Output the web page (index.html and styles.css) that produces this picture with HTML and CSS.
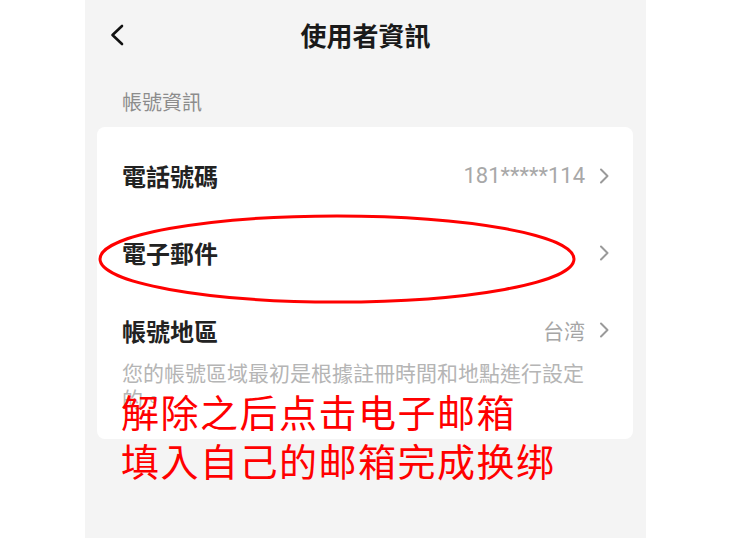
FILE: index.html
```html
<!DOCTYPE html>
<html lang="zh-Hant">
<head>
<meta charset="utf-8">
<title>使用者資訊</title>
<link rel="stylesheet" href="styles.css">
</head>
<body>
<div class="phone">
  <header class="nav">
    <svg class="back" width="16" height="22" viewBox="0 0 16 22"><path d="M13 2 L3.5 11 L13 20" fill="none" stroke="#111" stroke-width="2.6" stroke-linecap="round" stroke-linejoin="round"/></svg>
    <h1 class="title">使用者資訊</h1>
    <span></span>
  </header>
  <div class="section-label">帳號資訊</div>
  <div class="card">
    <div class="row">
      <span class="label">電話號碼</span>
      <span class="value num">181*****114</span>
      <svg class="chev" width="11" height="16" viewBox="0 0 11 16"><path d="M2 1.5 L8.5 8 L2 14.5" fill="none" stroke="#9a9a9a" stroke-width="2" stroke-linecap="round" stroke-linejoin="round"/></svg>
    </div>
    <div class="row">
      <span class="label">電子郵件</span>
      <span class="value"></span>
      <svg class="chev" width="11" height="16" viewBox="0 0 11 16"><path d="M2 1.5 L8.5 8 L2 14.5" fill="none" stroke="#9a9a9a" stroke-width="2" stroke-linecap="round" stroke-linejoin="round"/></svg>
    </div>
    <div class="row region">
      <span class="label">帳號地區</span>
      <span class="value">台湾</span>
      <svg class="chev" width="11" height="16" viewBox="0 0 11 16"><path d="M2 1.5 L8.5 8 L2 14.5" fill="none" stroke="#9a9a9a" stroke-width="2" stroke-linecap="round" stroke-linejoin="round"/></svg>
    </div>
    <p class="desc">您的帳號區域最初是根據註冊時間和地點進行設定的。</p>
  </div>
  <svg class="ellipse" width="480" height="92" viewBox="0 0 480 92"><ellipse cx="240" cy="46" rx="237" ry="43" fill="none" stroke="#ff0000" stroke-width="3"/></svg>
  <div class="annotation">解除之后点击电子邮箱<br>填入自己的邮箱完成换绑</div>
</div>
</body>
</html>
```
FILE: styles.css
```css
html, body {
  margin: 0;
  padding: 0;
  background: #ffffff;
}
body {
  font-family: "Noto Sans CJK TC", "Noto Sans CJK SC", sans-serif;
  width: 750px;
  height: 538px;
  overflow: hidden;
}
.phone {
  position: relative;
  margin-left: 85px;
  width: 561px;
  height: 538px;
  background: #f4f4f4;
}
.nav {
  height: 70px;
  display: grid;
  grid-template-columns: 1fr auto 1fr;
  align-items: center;
}
.back {
  display: block;
  margin-left: 24px;
}
.title {
  margin: 0;
  font-size: 26px;
  font-weight: 700;
  color: #1a1a1a;
  line-height: 30px;
}
.section-label {
  margin-top: 19px;
  padding-left: 37px;
  font-size: 20px;
  line-height: 26px;
  color: #8c8c8c;
}
.card {
  margin: 12px 13px 0 12px;
  background: #ffffff;
  border-radius: 8px;
  padding: 10px 23px 28px 25px;
}
.row {
  height: 77px;
  display: flex;
  align-items: center;
}
.row.region {
  height: 58px;
  padding-top: 10px;
}
.label {
  font-size: 24px;
  font-weight: 700;
  color: #222222;
  flex: 1;
}
.value {
  font-size: 21px;
  color: #a6a6a6;
  margin-right: 14px;
}
.value.num {
  font-family: "Roboto", "Noto Sans", sans-serif;
  font-size: 22px;
  color: #a8a8a8;
}
.chev {
  display: block;
}
.desc {
  margin: 0;
  max-width: 470px;
  font-size: 21px;
  line-height: 26px;
  color: #b5b5b5;
}
.ellipse {
  position: absolute;
  left: 12px;
  top: 213px;
}
.annotation {
  position: absolute;
  left: 36px;
  top: 386px;
  font-family: "Noto Sans CJK SC", sans-serif;
  font-size: 38px;
  letter-spacing: 1.5px;
  line-height: 49px;
  color: #ff0000;
  white-space: nowrap;
}
```
